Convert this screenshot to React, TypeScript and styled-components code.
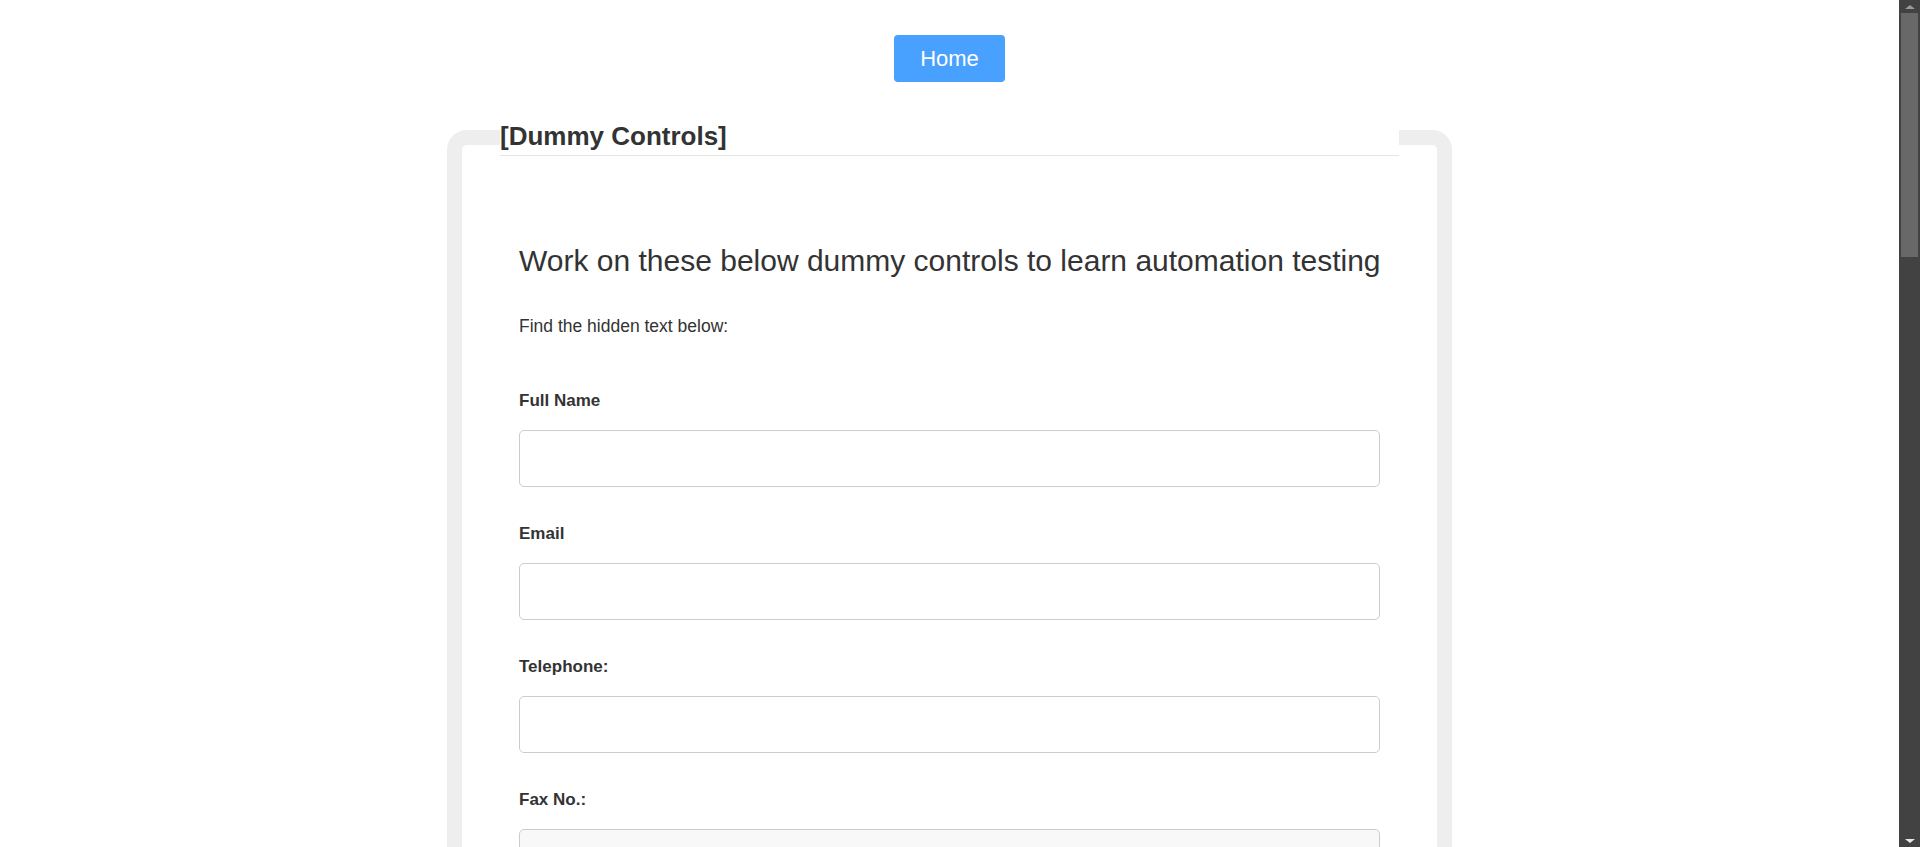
import React from "react";
import styled, { createGlobalStyle } from "styled-components";

const GlobalStyle = createGlobalStyle`
  html, body {
    margin: 0;
    padding: 0;
    background: #fff;
    font-family: "Liberation Sans", Arial, sans-serif;
    color: #333;
    overflow: hidden;
  }
`;

const Frame = styled.div`
  display: flex;
  height: 100vh;
`;

const Scroller = styled.div`
  flex: 1;
  overflow-y: auto;
  scrollbar-width: none;

  &::-webkit-scrollbar {
    display: none;
  }
`;

const ScrollBar = styled.div`
  width: 21px;
  display: flex;
  flex-direction: column;
  background: #424242;
`;

const ArrowButton = styled.div<{ $down?: boolean }>`
  height: 13px;
  display: flex;
  align-items: center;
  justify-content: center;

  &::before {
    content: "";
    width: 0;
    height: 0;
    border-left: 5px solid transparent;
    border-right: 5px solid transparent;
    ${(p) =>
      p.$down
        ? "border-top: 4px solid #e8e8e8;"
        : "border-bottom: 4px solid #9a9a9a;"}
  }
`;

const Track = styled.div`
  flex: 1;
  padding: 0 2px;
`;

const Thumb = styled.div`
  height: 244px;
  background: #686868;
`;

const Page = styled.div`
  display: flex;
  flex-direction: column;
  align-items: center;
  padding: 35px 0 60px;
`;

const HomeButton = styled.button`
  width: 111px;
  height: 47px;
  border: none;
  border-radius: 4px;
  background: #48a0ff;
  color: #fff;
  font-family: "Liberation Sans", Arial, sans-serif;
  font-size: 22px;
  cursor: pointer;
  margin-bottom: 37px;
`;

const Panel = styled.fieldset`
  width: 1005px;
  box-sizing: border-box;
  margin: 0;
  padding: 0 38px 60px;
  border: 15px solid #eee;
  border-radius: 20px;
  min-width: 0;
`;

const Legend = styled.legend`
  display: block;
  width: 100%;
  box-sizing: border-box;
  padding: 0 0 2px;
  margin: 0;
  font-size: 26px;
  font-weight: bold;
  line-height: 34px;
  color: #333;
  border-bottom: 1px solid #e5e5e5;
`;

const Content = styled.div`
  padding: 87px 19px 0;
`;

const Title = styled.h3`
  margin: 0 0 35px;
  font-size: 30px;
  font-weight: normal;
  line-height: 36px;
  white-space: nowrap;
  color: #333;
`;

const Hint = styled.p`
  margin: 0 0 51px;
  font-size: 17.5px;
  line-height: 24px;
`;

const Field = styled.div`
  margin-bottom: 35px;
`;

const Label = styled.label`
  display: block;
  margin-bottom: 17px;
  font-size: 17px;
  font-weight: bold;
  line-height: 24px;
  color: #333;
`;

const Input = styled.input<{ $readOnly?: boolean }>`
  display: block;
  width: 100%;
  height: 57px;
  box-sizing: border-box;
  padding: 6px 14px;
  border: 1px solid #ccc;
  border-radius: 5px;
  background: ${(p) => (p.$readOnly ? "#f8f8f8" : "#fff")};
  font-family: "Liberation Sans", Arial, sans-serif;
  font-size: 17px;
  color: #555;
  outline: none;
`;

const Select = styled.select`
  display: block;
  width: 100%;
  height: 57px;
  box-sizing: border-box;
  padding: 6px 14px;
  border: 1px solid #ccc;
  border-radius: 5px;
  background: #fff;
  font-family: "Liberation Sans", Arial, sans-serif;
  font-size: 17px;
  color: #555;
`;

const TextArea = styled.textarea`
  display: block;
  width: 100%;
  height: 160px;
  box-sizing: border-box;
  padding: 10px 14px;
  border: 1px solid #ccc;
  border-radius: 5px;
  font-family: "Liberation Sans", Arial, sans-serif;
  font-size: 17px;
  resize: vertical;
`;

const OptionRow = styled.div`
  display: flex;
  gap: 30px;
  font-size: 17px;
  line-height: 24px;

  label {
    display: flex;
    align-items: center;
    gap: 8px;
  }
`;

const SubmitButton = styled.button`
  height: 47px;
  padding: 0 28px;
  border: none;
  border-radius: 4px;
  background: #48a0ff;
  color: #fff;
  font-family: "Liberation Sans", Arial, sans-serif;
  font-size: 20px;
`;

const textFields = [
  { label: "Full Name" },
  { label: "Email" },
  { label: "Telephone:" },
  { label: "Fax No.:", readOnly: true },
  { label: "Company" },
  { label: "Address" },
  { label: "City" },
  { label: "Postal Code" },
];

const App = () => {
  return (
    <>
      <GlobalStyle />
      <Frame>
        <Scroller>
          <Page>
            <HomeButton>Home</HomeButton>
            <Panel>
              <Legend>[Dummy Controls]</Legend>
              <Content>
                <Title>Work on these below dummy controls to learn automation testing</Title>
                <Hint>Find the hidden text below:</Hint>

                {textFields.map((f) => (
                  <Field key={f.label}>
                    <Label>{f.label}</Label>
                    <Input $readOnly={f.readOnly} readOnly={f.readOnly} />
                  </Field>
                ))}

                <Field>
                  <Label>Country</Label>
                  <Select defaultValue="">
                    <option value="">-- Select --</option>
                    <option>India</option>
                    <option>USA</option>
                    <option>UK</option>
                  </Select>
                </Field>

                <Field>
                  <Label>Gender</Label>
                  <OptionRow>
                    <label>
                      <input type="radio" name="gender" /> Male
                    </label>
                    <label>
                      <input type="radio" name="gender" /> Female
                    </label>
                  </OptionRow>
                </Field>

                <Field>
                  <Label>Hobbies</Label>
                  <OptionRow>
                    <label>
                      <input type="checkbox" /> Reading
                    </label>
                    <label>
                      <input type="checkbox" /> Sports
                    </label>
                    <label>
                      <input type="checkbox" /> Music
                    </label>
                  </OptionRow>
                </Field>

                <Field>
                  <Label>Message</Label>
                  <TextArea />
                </Field>

                <SubmitButton>Submit</SubmitButton>
              </Content>
            </Panel>
          </Page>
        </Scroller>
        <ScrollBar>
          <ArrowButton />
          <Track>
            <Thumb />
          </Track>
          <ArrowButton $down />
        </ScrollBar>
      </Frame>
    </>
  );
};

export default App;
